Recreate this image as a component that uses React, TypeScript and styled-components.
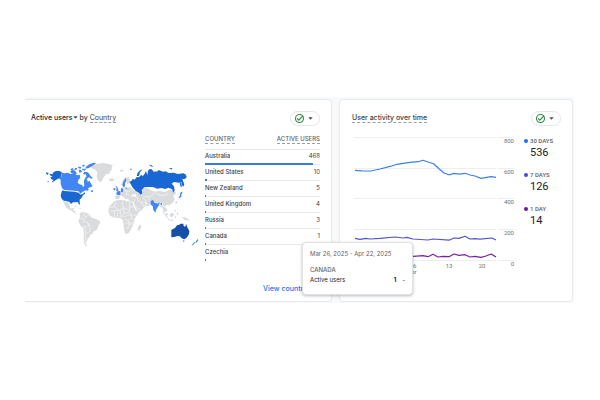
import React from "react";
import styled, { createGlobalStyle } from "styled-components";

const Global = createGlobalStyle`
  *, *::before, *::after { box-sizing: border-box; }
  body { margin: 0; background: #fff; font-family: Inter, Roboto, sans-serif; color: #3c4043; }
`;

const Page = styled.main`
  padding: 97px 26px 0 25px;
`;

const Board = styled.div`
  display: grid;
  grid-template-columns: 307fr 234fr;
  gap: 7px;
  padding: 2px 1px 1px 0;
  background: #f7f9fb;
`;

const Card = styled.section<{ $flushLeft?: boolean }>`
  position: relative;
  min-width: 0;
  min-height: 203px;
  display: flex;
  flex-direction: column;
  background: #fff;
  border: 1px solid #e6e9ed;
  border-radius: ${(p) => (p.$flushLeft ? "0 4px 4px 0" : "4px")};
  border-left-width: ${(p) => (p.$flushLeft ? "0" : "1px")};
  padding: ${(p) => (p.$flushLeft ? "11px 11px 7px 6px" : "11px 11px 7px 12px")};
`;

const CardHead = styled.header`
  display: flex;
  justify-content: space-between;
  align-items: flex-start;
`;

const Title = styled.h2`
  margin: 2px 0 0;
  display: flex;
  align-items: flex-start;
  font-size: 7px;
  line-height: 9px;
  font-weight: 500;
`;

const Dashed = styled.span<{ $light?: boolean }>`
  display: inline-block;
  font-weight: ${(p) => (p.$light ? 400 : 500)};
  border-bottom: 1px dashed #9aa0a6;
`;

const MetricButton = styled.button`
  display: flex;
  align-items: center;
  padding: 0;
  margin-right: 2px;
  border: 0;
  background: none;
  color: #202124;
  font: inherit;
`;

const StatusButton = styled.button`
  display: flex;
  align-items: center;
  justify-content: space-between;
  width: 30px;
  height: 15px;
  padding: 0 6px 0 3px;
  border: 1px solid #e4e6e9;
  border-radius: 8px;
  background: #fff;
`;

const CountryBody = styled.div`
  display: flex;
  align-items: flex-start;
  gap: 1px;
`;

const MapBox = styled.div`
  flex: 1;
  min-width: 0;
  padding: 24px 0 0 5px;
  svg { display: block; width: 100%; }
`;

const Table = styled.table`
  width: 115px;
  margin-top: 9px;
  border-collapse: collapse;
  font-size: 6px;
  line-height: 8px;
`;

const HeadCell = styled.th<{ $end?: boolean }>`
  height: 14px;
  padding: 0;
  vertical-align: top;
  border-bottom: 1px solid #e3e5e8;
  text-align: ${(p) => (p.$end ? "right" : "left")};
  font-weight: 500;
  color: #5f6368;
`;

const NameCell = styled.th`
  height: 14px;
  padding: 0 0 1px;
  text-align: left;
  font-weight: 500;
`;

const ValueCell = styled.td`
  padding: 0 0 1px;
  text-align: right;
`;

const BarCell = styled.td`
  padding: 0;
  height: 2px;
`;

const Track = styled.div<{ $bare?: boolean }>`
  height: 2px;
  border-bottom: ${(p) => (p.$bare ? "0" : "1px solid #e8eaed")};
`;

const Bar = styled.div`
  height: 2px;
  min-width: 1px;
  background: #3b7ddd;
`;

const FooterLink = styled.a`
  margin-top: auto;
  align-self: flex-end;
  margin-right: 7px;
  font-size: 7px;
  line-height: 10px;
  font-weight: 500;
  color: #1a73e8;
  text-decoration: none;
`;

const Tooltip = styled.aside`
  position: absolute;
  z-index: 2;
  right: -82px;
  bottom: 6px;
  width: 111px;
  height: 53px;
  padding: 7px;
  border: 1px solid #e0e2e5;
  border-radius: 4px;
  background: #fff;
  box-shadow: 0 1px 3px rgba(60, 64, 67, 0.35);
  font-size: 6px;
  line-height: 8px;
`;

const TipDate = styled.div`
  color: #5f6368;
`;

const TipCountry = styled.div`
  margin-top: 8px;
  color: #5f6368;
  font-weight: 500;
`;

const TipRow = styled.div`
  display: flex;
  margin-top: 2px;
  color: #202124;
  span { flex: 1; }
  b { font-weight: 700; margin-right: 6px; }
`;

const ActivityBody = styled.div`
  display: flex;
  gap: 9px;
  margin-top: 6px;
`;

const ChartBox = styled.div`
  flex: 1;
  min-width: 0;
  svg { display: block; width: 100%; font-family: Roboto, sans-serif; }
`;

const Legend = styled.dl`
  width: 37px;
  margin: 5px 0 0;
  display: flex;
  flex-direction: column;
  gap: 11px;
`;

const LegendLabel = styled.dt<{ $color: string }>`
  display: flex;
  align-items: center;
  gap: 2px;
  font-size: 6px;
  line-height: 8px;
  font-weight: 500;
  font-family: Roboto, sans-serif;
  color: #5f6368;
  white-space: nowrap;
  &::before {
    content: "";
    width: 4px;
    height: 4px;
    border-radius: 50%;
    background: ${(p) => p.$color};
  }
`;

const LegendValue = styled.dd`
  margin: 0 0 0 6px;
  font-family: Roboto, sans-serif;
  font-size: 11px;
  line-height: 15px;
  color: #202124;
`;

const Caret = ({ size = 5 }: { size?: number }) => (
  <svg width={size} height={size} viewBox="0 0 6 6" aria-hidden="true">
    <path d="M0.3 1.5h5.4L3 4.4z" fill="#4a4e52" />
  </svg>
);

const Status = () => (
  <StatusButton type="button" aria-label="Data quality">
    <svg width="11" height="11" viewBox="0 0 11 11" fill="none" stroke="#2e8b46" aria-hidden="true">
      <circle cx="5.5" cy="5.5" r="4" strokeWidth="1.1" />
      <path d="M3.1 5.4l1.7 1.7 4.3-4.5" strokeWidth="1.2" />
    </svg>
    <Caret />
  </StatusButton>
);

const GREY = "#dadbdd";
const LIGHT = "#4285f4";
const MID = "#1967d2";
const DARK = "#174ea6";

const WorldMap = () => (
  <svg viewBox="0 -3 504 303" role="img" aria-label="Active users by country">
    <g fill={GREY}>
      <path d="M164 47l10-6 10-3 18-2 20 4 8 3-3 7 1 7-6 4-2 7-10 2-7 9-4 9-4 5-5-1-6-8-2-11 2-10-6-7-8-2z" />
      <path d="M219 85l5-3 9 1 2 3-6 5-8-1z" />
      <path d="M82 150l4 2 8 1 4 3 3 6 1 8 5 3 6-4 2 4-5 4 6 2 2 6 5 3-3 1-6-4-10-7-12-6-4-8-6-10z" />
      <path d="M113 165l8 1 6 4-6-1zM128 171l8 1-4 2z" />
      <path d="M131 188l6-5 8 1 8 2 8 5 3 7 8 4 9 3 10 4 2 6-5 7-3 10-4 6-8 3-4 8-6 3-3 7-5 3-2 8-3 4 1 7 3 5-5-2-5-7-1-14 1-18-2-13-8-8-7-13 1-5 4-6z" />
    </g>
    <g stroke="#fff" strokeWidth="1.5" fill="none">
      <path d="M142 184l2 10 8 2 10-6M131 205l9-4 4 8-4 6M152 196l-8 6M144 209l12 7 5 12 2 12M141 226l6 2 8-4M147 228l2 14-1 36M163 240l-12 8M163 248l3 9M156 216l5 12" />
    </g>
    <g fill={MID}>
      <path d="M41 68l8 2 4-7 7-3 10 0 8 4-4 15 2 8-7-5-8 4-7 5-8 4 6-8-7-3-1-6 6-1-9-5z" />
      <path d="M30 64l8 2-3 6-4-3zM33 92l6-2-2 4z" />
      <path d="M79 118l7 2 30 2 12 3 6 6 7-3 5-4 2 3-7 6-4 7-6 6 0 8 2 7-4-1-4-7-9 1-5 0-6 5-5-6-7-2-10-2-6-6-3-9 2-9z" />
    </g>
    <g fill={LIGHT}>
      <path d="M78 65l7 2 10-2 9 4 13 0 7 4 7-2 2 9-6 7-2 8 6 5 7 2 4 7 3-6-1-8 0-8 4-5 6 4 1 6 6-2 4 8 5 7-7 4-8 3 4 4-5 3-5-1-9 4-7 6-5-7-13-2-30-2-7-5-4-14 0-12z" />
      <path d="M103 60l8-4 7 4 5 8-7 2-11-3zM103 54l8-3 2 4-7 3zM117 51l7 1-3 5-6-1zM128 56l7 0 3 7-8 2zM127 47l9 1-2 5-8-2zM138 53l12 1-4 5-7-2zM146 62l9 2 5 5 4 7 7 6-6 1-6-4-7 5-6-2 6-6-3-6-8 0 2-5zM150 47l10-7 13-5 8 1-11 8-12 7-10 2zM139 42l7-1-1 6-6-1zM163 119l8-1 0 5-6-1z" />
    </g>
    <g transform="translate(192 0)">
      <g fill={GREY}>
        <path d="M42 151l10-3 19-2 8 5 11 0 9 5 2 11 7 12 10 1-6 13-8 9-2 12-3 9-5 9-5 12-11 6-5-9-2-17-2-15-5-7-14-2-12-1-9-6-4-12 4-15z" />
        <path d="M121 220l3 8-6 12-5-2 2-10z" />
        <path d="M46 133l13 0 2 4-6 8-9-1zM63 128l7 0 4 8 7 8-3 1-8-8-7-3zM63 110l9-3 8 3 10-2 9 9 11 5-3 7-11 2-4 6-10 8-8-7-7-9-6-7zM63 101l5-12 6-8 11-3 4 6 1 13-9 2-2-9-4 11-5 1z" />
        <path d="M85 137l15-1 12 5 12-5 13 5 11 9 6 3-7 12-8 1-6 2-10 12-10 1-8-13-5-15-15-5z" />
        <path d="M107 121l10-6 12-3 14 0 12 7 12 3 12-3 14 4 13-5 9-3 13 8-2 7-6 4 4 11-5 9-11 9-9-1-4 5 7 10-4 6-4-4-1 11-3-5-2-14-7-4-8-7-14-2-12-6-10-6-14 0-14-8z" />
        <path d="M190 184l9 7 7 12-8-6zM211 188l8-3 3 5-5 9-8-4zM202 204l20 3-4 3-14-3zM224 194l5 1-3 8zM223 176l5 1-2 8zM244 197l9 1 11 6 5 7-8-3-8-1-3-5z" />
        <path d="M42 39l3-1 0 3zM58 58l7-2 7 1-7 6z" />
      </g>
      <g stroke="#fff" strokeWidth="1.6" fill="none">
        <path d="M30 169l14-1 2-16M44 168l14 10 13-7-5-13 4-11M71 171l17 7 0-26M88 168l13 0M30 181l13-2 15-1M43 179l1 20M54 181l-2 18M62 178l-1 20M71 172l1 15-8 11M72 187l16-3M88 178l4 12 9 3 10-1M70 198l11-4 11-3 5 10M72 205l14 3 7-7 9 5M74 216l12 0 14-1M86 208l1 22-9 3M87 222l7-4 7 7M99 156l5 10 18 11M104 145l-2 10M112 141l3 9 11 6 4-3 12 6M126 156l4 10 12-6M130 137l13 0 12-2 10-13M128 140l8 8 4 11M145 137l3 9M73 109l1 9 8 3-4 9M82 121l10-2M78 130l11 2M167 124l7 7 17 3 15-7M186 154l3 13 9 0M176 157l9 7" />
      </g>
      <g fill={MID}>
        <path d="M88 92l7-3 3-6 6 3 6-8 6 1 9-8 3 5 6-8 4-8 4 13 2-14 5-5 6 1 6 7 12-1 3-4 13 5 9-1 7 5 17-1 11 4 17-2 8 4 2 7-5 6-8 0 3 9 3 7-3 7-5-6-1-8-8 2-14-2-7 5 7 8 2 12-5 7-2-10-12-5-9 4-12-3-12 2-13-5-12 0-14 1-8 8 2 9-5 5-7-7-8-4-8-9z" />
        <path d="M110 75l3-10 8-7 7-3-8 9-3 11zM147 41l8 2 5 6-9-4zM207 51l11 1-4 4zM238 91l5 5 3 12-4-1zM89 54l7-1-3 4z" />
      </g>
      <g fill={LIGHT}>
        <path d="M152 150l7-3 4 8 9 3 7-4-4 12-6 9-3 10-6-8-2-12-6-4z" />
        <path d="M46 103l6 5 4 11-8 1 2-8zM41 111l5 0-1 7-5-1zM52 121l9-1 1 11-7 2-7-4zM63 112l6 1 0 10-6-1zM70 92l7-12 2 9-4 6 0 11-5 2-3-5zM77 108l4 3-3 5zM182 156l4 0 0 5-4 0zM200 187l3 2-3 3zM241 125l4-3 3 4-4 4 0 8-7 4-1-3 4-4zM227 152l3 1-2 5zM232 186l3 2-2 3z" />
        <path d="M293 264l2 4-6 7-3-1zM283 273l3 1-7 9-4 0z" />
        <path d="M248 268l6 1-3 5z" />
      </g>
      <path fill={DARK} d="M214 236l11-5 6-8 7-2 4-3 8 0 1 7 5 2 2-9 4 11 6 11-1 10-7 10-7 5-8-3-5-6-8-1-9 3-9 1z" />
    </g>
  </svg>
);

const rows = [
  { name: "Australia", users: 468 },
  { name: "United States", users: 10 },
  { name: "New Zealand", users: 5 },
  { name: "United Kingdom", users: 4 },
  { name: "Russia", users: 3 },
  { name: "Canada", users: 1 },
  { name: "Czechia", users: null },
];

const grid = [
  { y: 137, label: "800" },
  { y: 168, label: "600" },
  { y: 198, label: "400" },
  { y: 229, label: "200" },
  { y: 260, label: "0" },
];

const ActivityChart = () => (
  <svg viewBox="352 132 163 146" role="img" aria-label="User activity over time">
    {grid.map((g) => (
      <g key={g.label}>
        <path d={`M354 ${g.y + 0.5}H496M498 ${g.y + 0.5}H514`} stroke="#eceef0" />
        <text x="514" y={g.y + 6} textAnchor="end" fontSize="6" fill="#6f7378">{g.label}</text>
      </g>
    ))}
    <g fontSize="6" fill="#6f7378" textAnchor="middle">
      <text x="413" y="268">06</text>
      <text x="412" y="274">Apr</text>
      <text x="449" y="268">13</text>
      <text x="482" y="268">20</text>
    </g>
    <g fill="none" strokeWidth="1.2" strokeLinejoin="round">
      <path stroke="#3b82dc" d="M355 170.4L362 170.8L371 171L380 169L391 166.2L397 164.3L408 162.6L418 161.7L423 160.2L428 162L433.5 163.7L439 168.7L444 173L449 174.8L454 173.4L459 174.1L465 173.3L470 175L475 176L481 178.4L491 176.7L496 177.4" />
      <path stroke="#5254d2" d="M355 238.4L360 239.3L366 238.3L370 239L380 238.4L395 237L403 238L407 237.4L413 239L428 240L433 239L449 240.2L454 238L459 238.4L465 236.2L470 239L475 238.6L480 239.2L492 238L496 240" />
      <path stroke="#7b1fa2" d="M410 256.7L423 255.7L428 256.7L433 254.3L438 257L443 256.4L449 256.7L454 254L459 255.3L465 254.7L470 257L475 256.4L481 257.4L486 256L491 254L496 257" />
    </g>
  </svg>
);

const series = [
  { label: "30 DAYS", value: 536, color: "#1a73e8" },
  { label: "7 DAYS", value: 126, color: "#4f46d8" },
  { label: "1 DAY", value: 14, color: "#6a1b9a" },
];

export default function App() {
  return (
    <Page>
      <Global />
      <Board>
        <Card $flushLeft>
          <CardHead>
            <Title>
              <MetricButton type="button">Active users<Caret /></MetricButton>
              <span>by <Dashed $light>Country</Dashed></span>
            </Title>
            <Status />
          </CardHead>
          <CountryBody>
            <MapBox><WorldMap /></MapBox>
            <Table>
              <thead>
                <tr>
                  <HeadCell scope="col"><Dashed>COUNTRY</Dashed></HeadCell>
                  <HeadCell scope="col" $end><Dashed>ACTIVE USERS</Dashed></HeadCell>
                </tr>
              </thead>
              <tbody>
                {rows.map((r) => (
                  <React.Fragment key={r.name}>
                    <tr>
                      <NameCell scope="row">{r.name}</NameCell>
                      <ValueCell>{r.users}</ValueCell>
                    </tr>
                    <tr>
                      <BarCell colSpan={2}>
                        <Track $bare={r.users === null}>
                          <Bar style={{ width: `${((r.users ?? 0) / 500) * 100}%` }} />
                        </Track>
                      </BarCell>
                    </tr>
                  </React.Fragment>
                ))}
              </tbody>
            </Table>
          </CountryBody>
          <FooterLink href="#countries">View countries</FooterLink>
          <Tooltip role="tooltip">
            <TipDate>Mar 26, 2025 - Apr 22, 2025</TipDate>
            <TipCountry>CANADA</TipCountry>
            <TipRow><span>Active users</span><b>1</b>-</TipRow>
          </Tooltip>
        </Card>
        <Card>
          <CardHead>
            <Title><Dashed>User activity over time</Dashed></Title>
            <Status />
          </CardHead>
          <ActivityBody>
            <ChartBox><ActivityChart /></ChartBox>
            <Legend>
              {series.map((s) => (
                <div key={s.label}>
                  <LegendLabel $color={s.color}>{s.label}</LegendLabel>
                  <LegendValue>{s.value}</LegendValue>
                </div>
              ))}
            </Legend>
          </ActivityBody>
        </Card>
      </Board>
    </Page>
  );
}
